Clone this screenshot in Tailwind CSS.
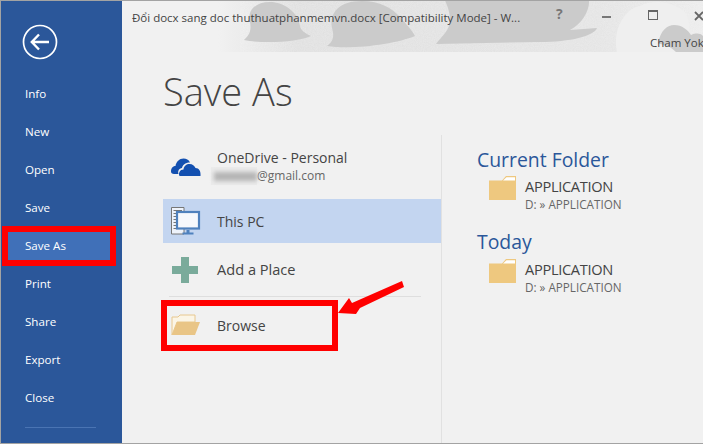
<!DOCTYPE html>
<html lang="vi">
<head>
    <meta charset="UTF-8">
    <title>Save As</title>
    <script src="https://cdn.jsdelivr.net/npm/@tailwindcss/browser@4"></script>
</head>
<body class="w-[703px] h-[444px] overflow-hidden bg-[#f1f1f1] font-['Open_Sans','Noto_Sans',sans-serif] text-[#444]">
<div class="relative w-[703px] h-[444px] overflow-hidden border-t border-l border-b border-[#a3a3a3] flex">

    <!-- Menu lateral -->
    <aside class="w-[121px] shrink-0 bg-[#2b579a] text-white">
        <div class="pl-[21px] pt-[23px] h-[74px]">
            <svg width="36" height="36" viewBox="0 0 36 36" fill="none" stroke="white">
                <circle cx="18" cy="18" r="16.5" stroke-width="1.7"/>
                <path d="M10 18H27M17 10.5L9.8 18L17 25.5" stroke-width="2.4"/>
            </svg>
        </div>
        <nav class="text-[11.6px]">
            <a class="flex items-center h-[38px] pl-6">Info</a>
            <a class="flex items-center h-[38px] pl-6">New</a>
            <a class="flex items-center h-[38px] pl-6">Open</a>
            <a class="flex items-center h-[38px] pl-6">Save</a>
            <a class="flex items-center h-[40px] -my-px ml-px mr-[6px] bg-[#4070b8] border-[6px] border-[#ff0000] pl-[17px]">Save As</a>
            <a class="flex items-center h-[38px] pl-6">Print</a>
            <a class="flex items-center h-[38px] pl-6">Share</a>
            <a class="flex items-center h-[38px] pl-6">Export</a>
            <a class="flex items-center h-[38px] pl-6">Close</a>
            <div class="ml-6 mr-[26px] mt-[10px] border-t border-[#4a74b3]"></div>
        </nav>
    </aside>

    <!-- Area principal -->
    <main class="relative flex-1 min-w-0">
        <!-- Faixa do titulo -->
        <header class="relative h-[51px] overflow-hidden">
            <svg class="absolute left-[-122px] top-[-1px]" width="703" height="52" viewBox="0 0 703 52">
                <defs>
                    <linearGradient id="fade" x1="0" x2="1" y1="0" y2="0">
                        <stop offset="0.31" stop-color="#f1f1f1"/>
                        <stop offset="0.42" stop-color="#e0e0e0"/>
                        <stop offset="0.85" stop-color="#e4e4e4"/>
                        <stop offset="1" stop-color="#ececec"/>
                    </linearGradient>
                    <filter id="grain" x="0" y="0" width="100%" height="100%">
                        <feTurbulence type="fractalNoise" baseFrequency="0.9" numOctaves="2" seed="4"/>
                        <feColorMatrix values="0 0 0 0 1  0 0 0 0 1  0 0 0 0 1  0.6 0 0 0 -0.12"/>
                    </filter>
                </defs>
                <rect width="703" height="52" fill="url(#fade)"/>
                <rect x="240" width="463" height="52" filter="url(#grain)" opacity="0.55"/>
                <path d="M617 52C612 30 625 8 640 6C652 0 670 0 685 12C692 22 690 40 683 52Z" fill="#efefef"/>
                <g fill="#cbcbcb">
                    <path d="M244 40C248 36 252 32 250 22C247 10 256 2 270 2C284 2 298 12 300 26C301 31 305 33 311 36C300 42 262 44 244 40Z"/>
                    <path d="M327 46C332 42 335 38 332 28C329 12 340 1 362 1C380 1 392 8 400 17C406 24 412 30 415 36C396 44 352 50 327 46Z"/>
                    <path d="M445 0H589C590 10 582 24 570 30L597 28C594 36 570 42 540 42L436 44C442 36 450 30 450 20C450 10 446 4 445 0Z"/>
                    <path d="M658 44C660 30 668 25 674 25C682 25 688 30 691 35C696 33 700 33 703 36V52H676C670 46 664 44 658 44Z"/>
                </g>
            </svg>
            <p class="relative pl-[10px] pt-[8px] text-[11.5px] leading-[18px] whitespace-nowrap">Đổi docx sang doc thuthuatphanmemvn.docx [Compatibility Mode] - W...</p>
            <div class="absolute left-[434px] top-[3px] text-[14px] leading-[20px] font-bold text-[#777]">?</div>
            <div class="absolute left-[480px] top-[15px] w-[9px] h-[2px] bg-[#777]"></div>
            <div class="absolute left-[526px] top-[9px] w-[10px] h-[10px] border border-t-2 border-[#666]"></div>
            <svg class="absolute left-[572px] top-[10px]" width="10" height="10" viewBox="0 0 10 10" stroke="#666" stroke-width="1.8"><path d="M1 1L9 9M9 1L1 9"/></svg>
            <p class="absolute left-[528px] top-[34px] text-[11.5px] leading-[16px] whitespace-nowrap">Cham Yok</p>
        </header>

        <h1 class="pl-[41px] pt-[12px] h-[83px] text-[38px] leading-[54px] font-light text-[#444]">Save As</h1>

        <div class="flex">
            <!-- Lugares -->
            <section class="w-[278px] pl-[41px] h-[309px] box-content border-r border-[#e1e1e1]">
                <div class="flex items-center h-[64px] pb-[2px] pl-[7px] gap-[16px]">
                    <svg width="31" height="21" viewBox="0 0 31 21" fill="#1350b0">
                        <path d="M1 15.5C1 11.5 3.5 10 5.5 10C6 6 9.5 2.5 13.5 2.5C16.5 2.5 18.5 3.5 20 6.5C15 6.5 12.5 9 12 12C9 12.5 7.5 15 8.5 18H4C2 18 1 17 1 15.5Z"/>
                        <path d="M9.5 20C8 17 10 13.5 13.5 13.5C13.8 10 16.5 8 19.5 8C22.5 8 24.5 10 25.5 12C29 12 31 15 30.5 20Z"/>
                    </svg>
                    <div>
                        <p class="text-[14px] leading-[20px]">OneDrive - Personal</p>
                        <p class="flex text-[12px] leading-[16px] text-[#666]">
                            <span class="-ml-[6px] -my-[1px] w-[46px] h-[18px] bg-[#ebebeb] flex items-center pl-[3px] pr-0"><span class="w-full h-[9px] bg-[#b5b5b5] blur-[2px]"></span></span>@gmail.com
                        </p>
                    </div>
                </div>
                <div class="flex items-center h-[44px] bg-[#c3d5f0] pl-[7px] gap-[16px]">
                    <svg width="31" height="32" viewBox="0 0 31 32" fill="none">
                        <path d="M1.5 2.5H14V29H1.5Z" fill="#eef3fb" stroke="#777"/>
                        <path d="M3.5 5.5H12M3.5 8.5H12M3.5 11.5H6M3.5 14.5H6M3.5 17.5H6M3.5 20.5H6M3.5 23.5H6" stroke="#777"/>
                        <rect x="7" y="7" width="22" height="16.5" fill="#f6f8fc" stroke="#4f81bd" stroke-width="2.2"/>
                        <path d="M16.5 25H19.5V27.5H23.5V29.5H12.5V27.5H16.5Z" fill="#4f81bd"/>
                    </svg>
                    <p class="text-[14px]">This PC</p>
                </div>
                <div class="flex items-center h-[53px] pl-[9px] pt-[1px] gap-[19px]">
                    <svg width="26" height="26" viewBox="0 0 26 26" fill="#7aab9b"><path d="M9 0H17V9H26V17H17V26H9V17H0V9H9Z"/></svg>
                    <p class="text-[14.6px]">Add a Place</p>
                </div>
                <div class="ml-[6px] mr-[20px] border-t border-[#dedede]"></div>
                <div class="-ml-[2px] mt-[3px] w-[177px] h-[51px] border-[6px] border-[#ff0000] flex items-center pl-[4px] pb-[1px] gap-[16px]">
                    <svg width="30" height="22" viewBox="0 0 30 22">
                        <path d="M1 21V3H7L9 1H24V8H6L1 21Z" fill="#fbf5e6" stroke="#e8c88f"/>
                        <path d="M6 8H29L24 21H1Z" fill="#e9c586"/>
                    </svg>
                    <p class="text-[14px]">Browse</p>
                </div>
            </section>

            <!-- Pastas recentes -->
            <section class="pl-[35px] pt-[12px]">
                <h2 class="text-[19.4px] leading-[26px] text-[#2b579a]">Current Folder</h2>
                <div class="flex ml-[12px] mt-[1px] h-[37px] gap-[9px]">
                    <svg class="mt-[2px]" width="27" height="24" viewBox="0 0 27 24">
                        <path d="M0 4.5H13L17 0H27V24H0Z" fill="#eec87f"/>
                        <path d="M14 4.5L17.5 1.2H26V4.5Z" fill="#fff"/>
                    </svg>
                    <div class="pt-[2px]">
                        <p class="text-[14.6px] leading-[20px] -tracking-[0.3px]">APPLICATION</p>
                        <p class="text-[11.7px] leading-[17px] text-[#666]">D: » APPLICATION</p>
                    </div>
                </div>
                <h2 class="mt-[18px] text-[19.4px] leading-[26px] text-[#2b579a]">Today</h2>
                <div class="flex ml-[12px] mt-[2px] gap-[9px]">
                    <svg class="mt-[2px]" width="27" height="24" viewBox="0 0 27 24">
                        <path d="M0 4.5H13L17 0H27V24H0Z" fill="#eec87f"/>
                        <path d="M14 4.5L17.5 1.2H26V4.5Z" fill="#fff"/>
                    </svg>
                    <div class="pt-[2px]">
                        <p class="text-[14.6px] leading-[20px] -tracking-[0.3px]">APPLICATION</p>
                        <p class="text-[11.7px] leading-[17px] text-[#666]">D: » APPLICATION</p>
                    </div>
                </div>
            </section>
        </div>
    </main>

    <!-- Seta vermelha -->
    <svg class="absolute left-[334px] top-[275px]" width="72" height="46" viewBox="0 0 72 46" fill="#ff0000">
        <path d="M67 5L69 11L25 32L21 38L3 37L14 22L17 27Z"/>
    </svg>
</div>
</body>
</html>
